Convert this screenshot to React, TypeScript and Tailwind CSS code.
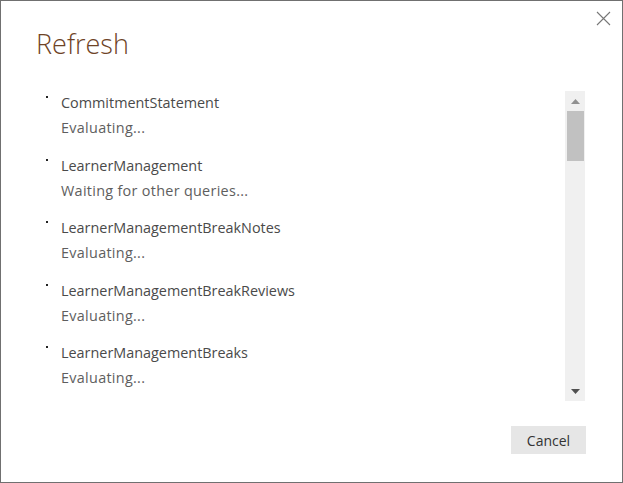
import React from 'react'

const queries = [
  { name: 'CommitmentStatement', status: 'Evaluating...' },
  { name: 'LearnerManagement', status: 'Waiting for other queries...' },
  { name: 'LearnerManagementBreakNotes', status: 'Evaluating...' },
  { name: 'LearnerManagementBreakReviews', status: 'Evaluating...' },
  { name: 'LearnerManagementBreaks', status: 'Evaluating...' },
]

export default function App() {
  return (
    <div
      className="relative w-[623px] h-[483px] bg-white border border-[#707070] overflow-hidden"
      style={{ fontFamily: '"Open Sans", "Noto Sans", sans-serif' }}
    >
      {/* close button */}
      <button className="absolute right-[11px] top-[9px] w-[16px] h-[16px] flex items-center justify-center">
        <svg width="15" height="15" viewBox="0 0 15 15">
          <path d="M1 1 L14 14 M14 1 L1 14" stroke="#777" strokeWidth="1.1" fill="none" />
        </svg>
      </button>

      <h1 className="pl-[35px] pt-[23px] text-[27px] leading-[40px] font-light text-[#6e4326]">Refresh</h1>

      <div className="flex mt-[27px] h-[310px]">
        <ul className="flex-1 pl-[45px] -mt-[1px] overflow-hidden">
          {queries.map(q => (
            <li key={q.name} className="flex items-start mb-[12.5px]">
              <span className="w-[2px] h-[2px] bg-[#222] mt-[6px] mr-[13px] shrink-0" />
              <div className="text-[14.4px] leading-[25px]">
                <div className="text-[#4a4a4a]">{q.name}</div>
                <div className="text-[#5e5e5e] tracking-[0.3px]">{q.status}</div>
              </div>
            </li>
          ))}
        </ul>

        {/* fake scrollbar */}
        <div className="w-[20px] mr-[37px] bg-[#f0f0f0] flex flex-col items-center">
          <div className="h-[20px] flex items-center justify-center">
            <svg width="9" height="5" viewBox="0 0 9 5"><path d="M4.5 0 L9 5 L0 5 Z" fill="#909090" /></svg>
          </div>
          <div className="w-[17px] h-[50px] bg-[#c1c1c1]" />
          <div className="flex-1" />
          <div className="h-[20px] flex items-center justify-center">
            <svg width="9" height="5" viewBox="0 0 9 5"><path d="M0 0 L9 0 L4.5 5 Z" fill="#505050" /></svg>
          </div>
        </div>
      </div>

      <div className="flex justify-end pr-[36px] mt-[25px]">
        <button className="w-[75px] h-[28px] bg-[#e6e6e6] text-[14px] text-[#333]">Cancel</button>
      </div>
    </div>
  )
}
